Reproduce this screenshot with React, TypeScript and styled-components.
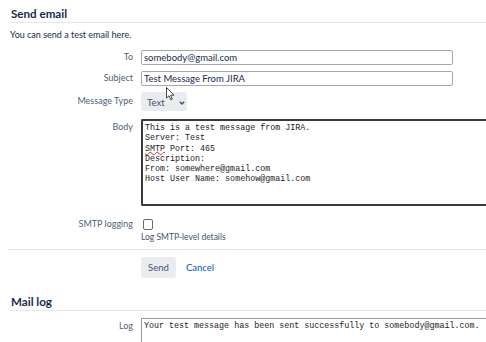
import React from "react";
import styled, { createGlobalStyle } from "styled-components";

const GlobalStyle = createGlobalStyle`
  html, body {
    margin: 0;
    padding: 0;
    background: #ffffff;
    overflow: hidden;
    font-family: Lato, "Noto Sans", sans-serif;
    color: #172b4d;
  }
`;

const bodyLines = [
  "This is a test message from JIRA.",
  "Server: Test",
  "",
  "Description:",
  "From: somewhere@gmail.com",
  "Host User Name: somehow@gmail.com",
];

const App = () => {
  return (
    <Page>
      <GlobalStyle />
      <Section>
        <Heading>Send email</Heading>
        <Intro>You can send a test email here.</Intro>
        <Form>
          <Row>
            <Label>To</Label>
            <TextInput value="somebody@gmail.com" readOnly />
          </Row>
          <Row>
            <Label>Subject</Label>
            <TextInput value="Test Message From JIRA" readOnly />
          </Row>
          <Row $gap={8}>
            <Label $top={2}>Message Type</Label>
            <Select>
              Text
              <svg width="8" height="6" viewBox="0 0 8 6">
                <path d="M1.8 1.8 L4 4 L6.2 1.8" fill="none" stroke="#42526e" strokeWidth="1.5" />
              </svg>
            </Select>
          </Row>
          <Row $gap={12}>
            <Label $top={1}>Body</Label>
            <BodyArea>
              {bodyLines.map((line, i) =>
                i === 2 ? (
                  <div key={i}>
                    <Misspelled>SMTP</Misspelled> Port: 465
                  </div>
                ) : (
                  <div key={i}>{line}</div>
                )
              )}
            </BodyArea>
          </Row>
          <Row $gap={0}>
            <Label $top={-1}>SMTP logging</Label>
            <div>
              <Checkbox />
              <Help>Log SMTP-level details</Help>
            </div>
          </Row>
        </Form>
        <Divider $inset={7} />
        <Actions>
          <Button>Send</Button>
          <LinkButton>Cancel</LinkButton>
        </Actions>
      </Section>
      <Section $top={16}>
        <Heading>Mail log</Heading>
        <Row $gap={0}>
          <Label $top={8}>Log</Label>
          <LogArea>Your test message has been sent successfully to somebody@gmail.com.</LogArea>
        </Row>
      </Section>
      <Cursor width="10" height="14" viewBox="0 0 10 14">
        <path
          d="M0.5 0.5 L0.5 11 L3 8.8 L4.8 12.8 L6.3 12.1 L4.6 8.2 L8 8.2 Z"
          fill="#ffffff"
          stroke="#333"
          strokeWidth="0.9"
          strokeLinejoin="round"
        />
      </Cursor>
    </Page>
  );
};

export default App;

const Page = styled.div`
  position: relative;
  width: 486px;
  height: 342px;
  overflow: hidden;
  padding-top: 6px;
  box-sizing: border-box;
`;

const Section = styled.section<{ $top?: number }>`
  display: flex;
  flex-direction: column;
  margin-top: ${(p) => p.$top ?? 0}px;
`;

const Heading = styled.h2`
  margin: 0 0 0 10px;
  padding: 0 0 1px 1px;
  font-size: 11.6px;
  font-weight: 700;
  line-height: 15px;
  color: #172b4d;
  border-bottom: 1px solid #e6e8ec;
`;

const Intro = styled.p`
  margin: 5px 0 0 10px;
  font-size: 9px;
  line-height: 14px;
  color: #172b4d;
`;

const Form = styled.div`
  display: flex;
  flex-direction: column;
  margin-top: 8px;
`;

const Row = styled.div<{ $gap?: number }>`
  display: grid;
  grid-template-columns: 133px 1fr;
  column-gap: 8px;
  margin-bottom: ${(p) => p.$gap ?? 6}px;
`;

const Label = styled.label<{ $top?: number }>`
  text-align: right;
  font-size: 9px;
  line-height: 14px;
  margin-top: ${(p) => p.$top ?? 0}px;
  color: #505f79;
`;

const TextInput = styled.input`
  width: 312px;
  height: 15px;
  box-sizing: border-box;
  margin: 0;
  padding: 0 2px;
  border: 1px solid #a8a8a8;
  border-radius: 2px;
  font-family: Lato, "Noto Sans", sans-serif;
  font-size: 9.5px;
  color: #172b4d;
  outline: none;
`;

const Select = styled.div`
  display: flex;
  align-items: center;
  gap: 13px;
  width: 46px;
  height: 19px;
  box-sizing: border-box;
  padding: 2px 0 0 6px;
  background: #ebecf0;
  border-radius: 3px;
  font-size: 9.5px;
  color: #42526e;
`;

const BodyArea = styled.div`
  width: 360px;
  height: 87px;
  box-sizing: border-box;
  padding: 2px 2px;
  border: 2px solid #3a3a3a;
  border-right: none;
  border-radius: 2px 0 0 2px;
  font-family: "Liberation Mono", "DejaVu Sans Mono", monospace;
  font-size: 8.35px;
  line-height: 10.3px;
  color: #222;
  white-space: pre;
`;

const Misspelled = styled.span`
  text-decoration: underline wavy #e0282e;
  text-decoration-thickness: 1px;
  text-underline-offset: 0px;
`;

const Checkbox = styled.span`
  display: block;
  width: 10px;
  height: 11px;
  margin: 1px 0 0 2px;
  border: 1px solid #6b6b6b;
  border-radius: 2px;
  box-sizing: border-box;
`;

const Help = styled.div`
  margin-top: 1px;
  font-size: 8.5px;
  line-height: 13px;
  color: #42526e;
`;

const Divider = styled.hr<{ $inset: number }>`
  margin: 5px 0 0 ${(p) => p.$inset}px;
  border: none;
  border-top: 1px solid #e6e8ec;
`;

const Actions = styled.div`
  display: flex;
  align-items: center;
  gap: 10px;
  margin: 7px 0 0 141px;
`;

const Button = styled.button`
  height: 21px;
  width: 35px;
  padding: 0;
  border: none;
  border-radius: 3px;
  background: #ebecf0;
  font-family: Lato, "Noto Sans", sans-serif;
  font-size: 9.5px;
  color: #42526e;
`;

const LinkButton = styled.a`
  font-size: 9.5px;
  color: #0052cc;
`;

const LogArea = styled.div`
  margin-top: 7px;
  width: 360px;
  height: 40px;
  box-sizing: border-box;
  padding: 2px 2px;
  border: 1px solid #9a9a9a;
  border-right: none;
  font-family: "Liberation Mono", "DejaVu Sans Mono", monospace;
  font-size: 8.35px;
  line-height: 10.3px;
  color: #222;
  white-space: pre;
`;

const Cursor = styled.svg`
  position: absolute;
  left: 166px;
  top: 87px;
`;
